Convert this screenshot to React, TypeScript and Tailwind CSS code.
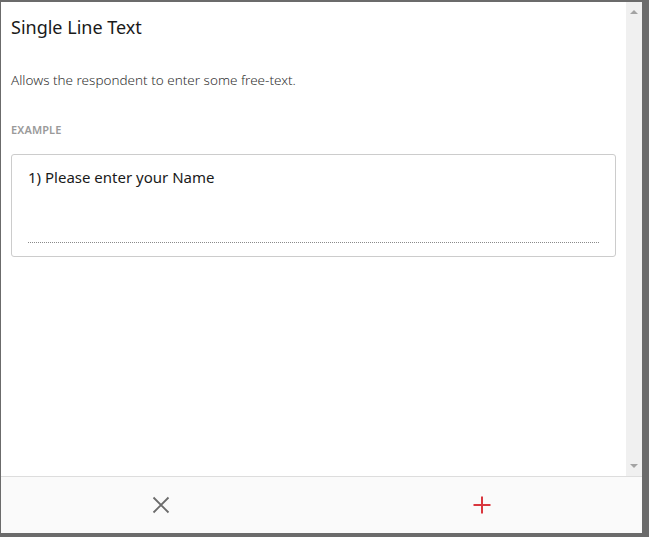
import React from "react";

export default function App() {
  return (
    <div className="w-[649px] h-[537px] bg-[#6b6b6b] pt-[2px] pl-[1px] overflow-hidden" style={{ fontFamily: '"Noto Sans", "Open Sans", sans-serif' }}>
      <div className="w-[641px] h-[531px] bg-white flex flex-col">
        <div className="flex flex-1 min-h-0">
          <div className="flex-1 pl-[10px] pr-[10px]">
            <div className="pt-[13px] text-[18px] leading-[24px] text-[#1a1a1a]">Single Line Text</div>
            <div className="mt-[32px] text-[13.5px] leading-[18px] font-light text-[#333]">Allows the respondent to enter some free-text.</div>
            <div className="mt-[33px] text-[11px] leading-[16px] font-semibold text-[#9a9a9a] tracking-[0.01em]">EXAMPLE</div>
            <div className="mt-[16px] h-[103px] border border-[#cccccc] rounded-[3px] px-[16px] pt-[11px]">
              <div className="text-[15px] leading-[22px] text-[#1a1a1a]">1) Please enter your Name</div>
              <div className="mt-[54px] border-b border-dotted border-[#8a8a8a]"></div>
            </div>
          </div>
          <div className="w-[16px] bg-[#f0f0f0] flex flex-col items-center justify-between py-[8px]">
            <div className="w-0 h-0 border-l-[4px] border-r-[4px] border-b-[4px] border-l-transparent border-r-transparent border-b-[#a3a3a3]"></div>
            <div className="w-0 h-0 border-l-[4px] border-r-[4px] border-t-[4px] border-l-transparent border-r-transparent border-t-[#a3a3a3]"></div>
          </div>
        </div>
        <div className="h-[57px] border-t border-[#dddddd] bg-[#fafafa] flex">
          <div className="flex-1 flex items-center justify-center">
            <svg width="18" height="18" viewBox="0 0 18 18" fill="none" stroke="#6b6b6b" strokeWidth="1.8">
              <path d="M1.5 1.5 L16.5 16.5 M16.5 1.5 L1.5 16.5" />
            </svg>
          </div>
          <div className="flex-1 flex items-center justify-center">
            <svg width="18" height="18" viewBox="0 0 18 18" fill="none" stroke="#d9363e" strokeWidth="2">
              <path d="M9 0.5 V17.5 M0.5 9 H17.5" />
            </svg>
          </div>
        </div>
      </div>
    </div>
  );
}
